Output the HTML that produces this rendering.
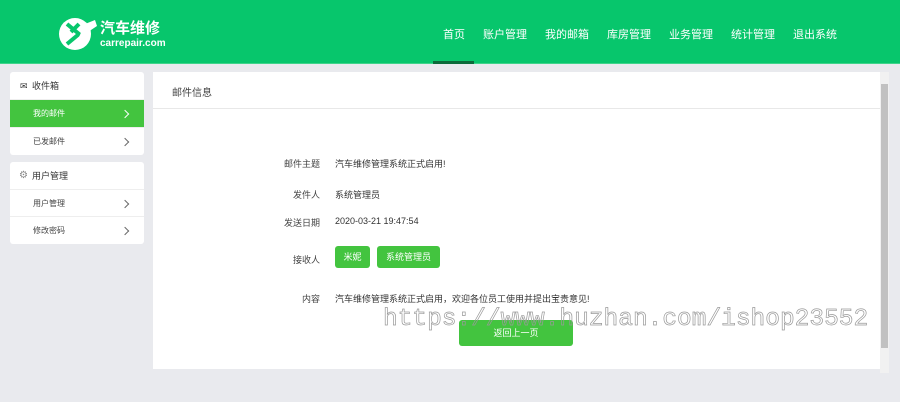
<!DOCTYPE html>
<html><head><meta charset="utf-8"><style>
*{margin:0;padding:0;box-sizing:border-box}
body{width:900px;height:402px;background:#e9eaee;font-family:"Liberation Sans","Noto Sans CJK SC",sans-serif;position:relative;overflow:hidden;color:#333}
.hd{position:absolute;left:0;top:0;width:900px;height:64px;background:#07c66c;border-bottom:1px solid #3fd48a}
.nav a{position:absolute;top:26px;font-size:11px;color:#fff;white-space:nowrap}
.ul{position:absolute;left:433px;top:61px;width:41px;height:3px;background:#0b6a3a}
.logo{position:absolute;left:57px;top:16px}
.box{position:absolute;left:10px;width:134px;background:#fff;border-radius:3px;overflow:hidden}
.box .t{height:28px;line-height:28px;font-size:9px;padding-left:22px;border-bottom:1px solid #eee;position:relative}
.box .i{height:27px;line-height:27px;font-size:8px;padding-left:23px;border-bottom:1px solid #eee;position:relative;color:#444}
.box .i.on{background:#43c43f;color:#fff;height:28px;line-height:28px}
.box .i:after{content:"";position:absolute;right:16px;top:11px;width:5px;height:5px;border-right:1px solid #666;border-top:1px solid #666;transform:rotate(45deg)}
.box .i.on:after{border-color:#fff}
.main{position:absolute;left:153px;top:72px;width:727px;height:297px;background:#fff}
.main .h{height:37px;line-height:44px;padding-left:19px;font-size:10px;border-bottom:1px solid #e8e8e8;color:#444}
.lb{position:absolute;width:120px;left:200px;text-align:right;font-size:9px;color:#444}
.lb.v{left:335px;text-align:left;width:400px;color:#333}
.tag{position:absolute;top:246px;height:22px;line-height:22px;background:#43c43f;color:#fff;font-size:9px;border-radius:3px;text-align:center}
.sb{position:absolute;left:880px;top:72px;width:9px;height:301px;background:#f1f1f1}
.sb i{position:absolute;left:1px;top:12px;width:7px;height:264px;background:#c1c1c1}
.wm{position:absolute;left:383px;top:306px;font-family:"Liberation Mono",monospace;font-size:24.5px;color:transparent;-webkit-text-stroke:0.7px #999;white-space:nowrap}
</style></head><body>
<div class="hd">
<svg class="logo" width="45" height="36" viewBox="0 0 45 36"><circle cx="18" cy="18" r="16" fill="#fff"/><path d="M10 8 L22 18 L10 28 M22 8 L14 16" stroke="#07c66c" stroke-width="4" fill="none"/><path d="M28 8 l10 -4 l2 6 l-6 4 l-8 10 l-4 -3 z" fill="#fff"/></svg>
<div style="position:absolute;left:100px;top:17px;color:#fff;font-size:15px;font-weight:bold">汽车维修</div>
<div style="position:absolute;left:100px;top:38px;color:#fff;font-size:10px;font-weight:bold">carrepair.com</div>
<div class="nav"><a style="left:443px">首页</a><a style="left:483px">账户管理</a><a style="left:545px">我的邮箱</a><a style="left:607px">库房管理</a><a style="left:669px">业务管理</a><a style="left:731px">统计管理</a><a style="left:793px">退出系统</a></div>
<div class="ul"></div>
</div>
<div class="box" style="top:72px"><div class="t"><span style="position:absolute;left:10px;font-size:9px">✉</span>收件箱</div><div class="i on">我的邮件</div><div class="i" style="border:none">已发邮件</div></div>
<div class="box" style="top:162px"><div class="t"><span style="position:absolute;left:9px;font-size:10px;color:#888">⚙</span>用户管理</div><div class="i">用户管理</div><div class="i" style="border:none">修改密码</div></div>
<div class="main"><div class="h">邮件信息</div></div>
<div class="lb" style="top:157px">邮件主题</div><div class="lb v" style="top:157px">汽车维修管理系统正式启用!</div>
<div class="lb" style="top:188px">发件人</div><div class="lb v" style="top:188px">系统管理员</div>
<div class="lb" style="top:216px">发送日期</div><div class="lb v" style="top:216px">2020-03-21 19:47:54</div>
<div class="lb" style="top:253px">接收人</div>
<div class="tag" style="left:335px;width:35px">米妮</div>
<div class="tag" style="left:377px;width:63px">系统管理员</div>
<div class="lb" style="top:292px">内容</div><div class="lb v" style="top:292px">汽车维修管理系统正式启用，欢迎各位员工使用并提出宝贵意见!</div>
<div style="position:absolute;left:459px;top:320px;width:114px;height:26px;background:#43c43f;border-radius:3px;color:#fff;font-size:9px;text-align:center;line-height:26px">返回上一页</div>
<div class="wm">https://www.huzhan.com/ishop23552</div>
<div class="sb"><i></i></div>
</body></html>
